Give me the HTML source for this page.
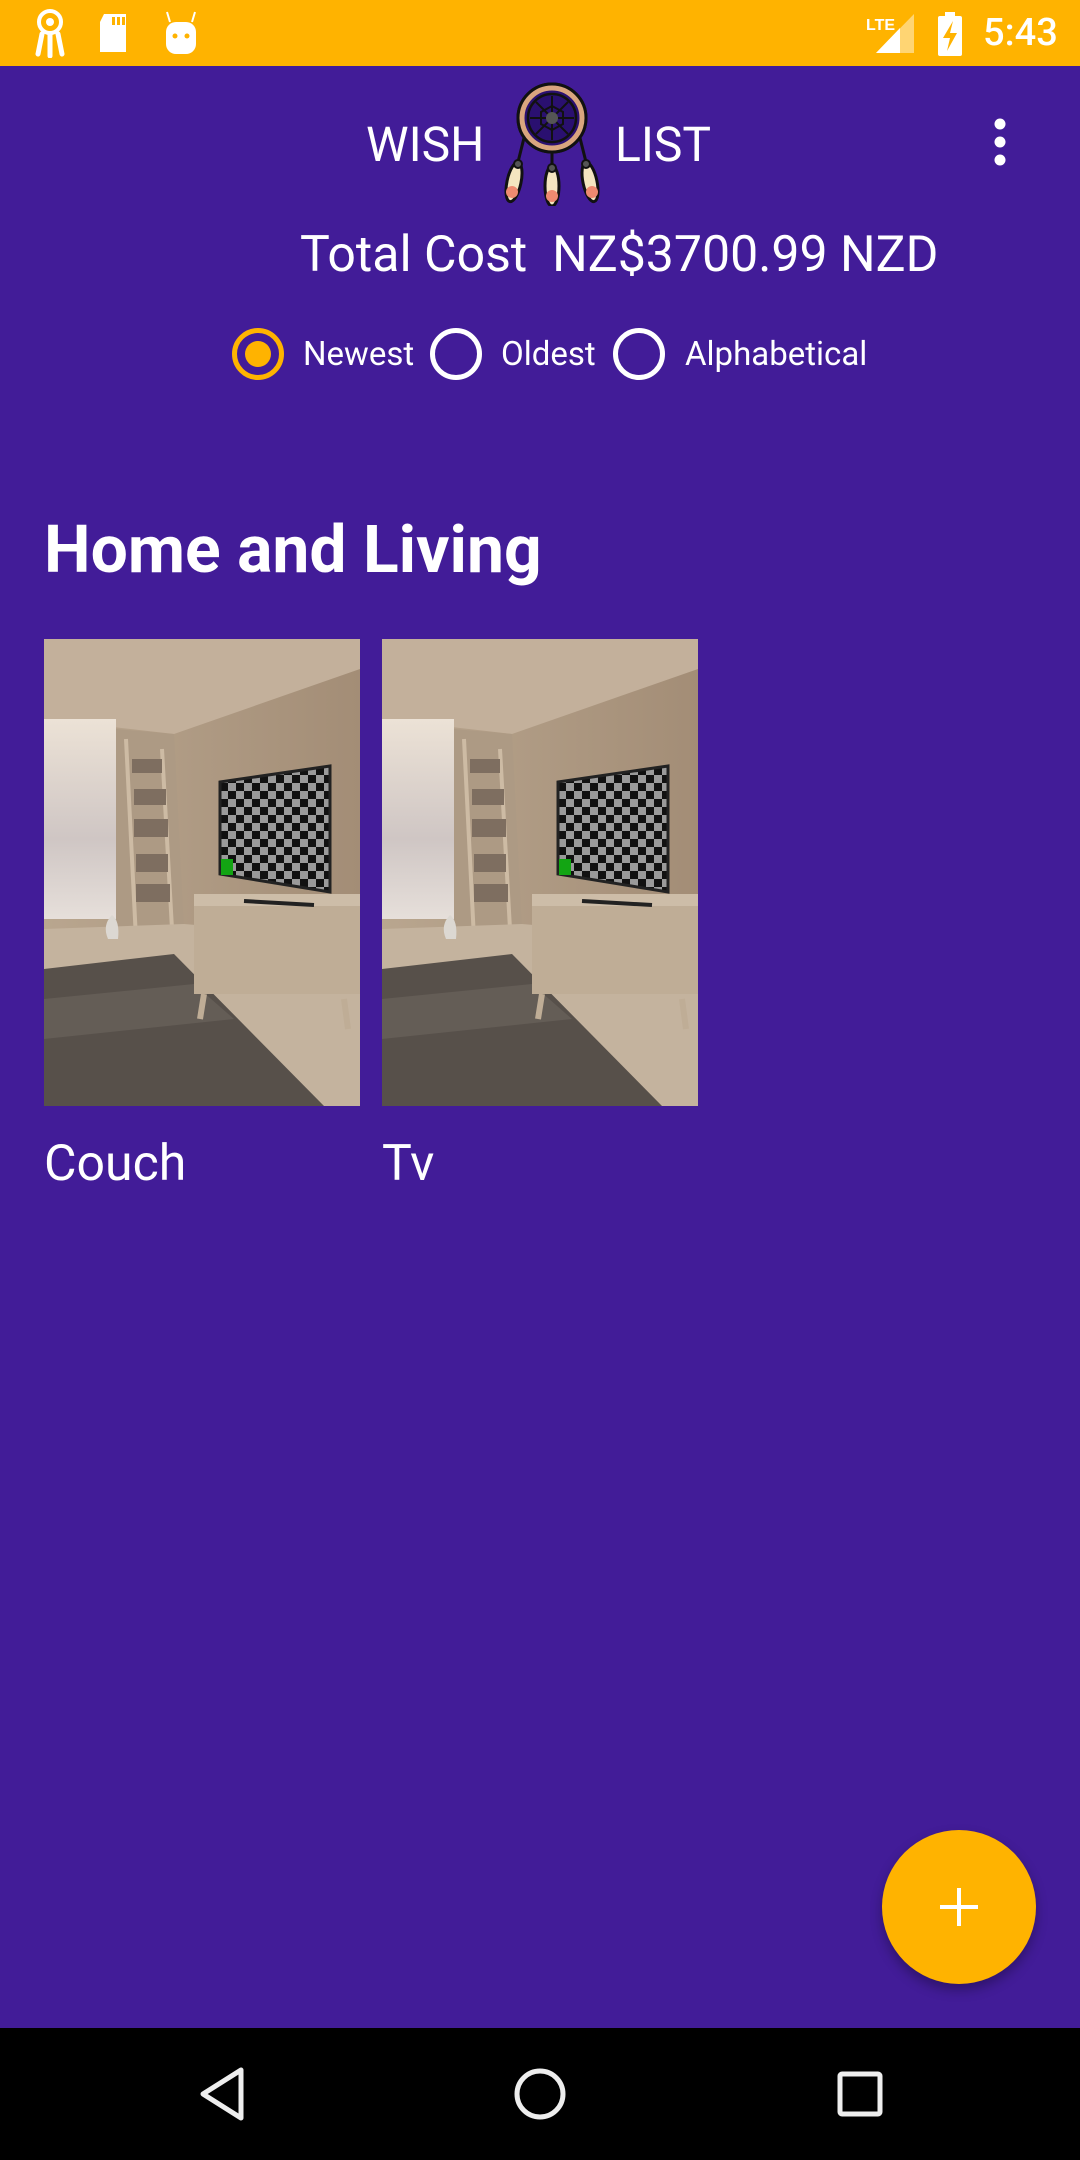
<!DOCTYPE html>
<html><head><meta charset="utf-8"><style>
*{margin:0;padding:0;box-sizing:border-box}
body{width:1080px;height:2160px;background:#421c98;font-family:"Roboto","Liberation Sans",sans-serif;color:#fff;position:relative;overflow:hidden}
.abs{position:absolute}
.sb{left:0;top:0;width:1080px;height:66px;background:#ffb300}
.nav{left:0;top:2028px;width:1080px;height:132px;background:#000}
.t{white-space:nowrap;line-height:1}
.radio{border-radius:50%;border:5px solid #fff;width:52px;height:52px}
</style></head><body>
<div class="abs sb"></div>
<svg class="abs" style="left:28px;top:8px" width="180" height="50" viewBox="0 0 180 50">
 <circle cx="22" cy="14" r="11" fill="none" stroke="#fff" stroke-width="4"/>
 <circle cx="22" cy="14" r="4" fill="#fff"/>
 <path d="M14 26 L10 46 M22 27 L22 48 M30 26 L34 46" stroke="#fff" stroke-width="5" stroke-linecap="round"/>
 <path d="M76 6 H98 V44 H72 V14 Z" fill="#fff"/>
 <rect x="84" y="9" width="3" height="8" fill="#ffb300"/><rect x="89" y="9" width="3" height="8" fill="#ffb300"/><rect x="94" y="9" width="3" height="8" fill="#ffb300"/>
 <rect x="138" y="14" width="30" height="32" rx="10" fill="#fff"/>
 <path d="M142 14 L139 4 M164 14 L167 4" stroke="#fff" stroke-width="2"/>
 <circle cx="147" cy="28" r="2.5" fill="#ffb300"/><circle cx="159" cy="28" r="2.5" fill="#ffb300"/>
</svg>
<svg class="abs" style="left:860px;top:8px" width="110" height="50" viewBox="0 0 110 50">
 <text x="6" y="22" font-size="16" font-weight="bold" fill="#fff" font-family="Liberation Sans">LTE</text>
 <path d="M16 45 L54 6 L54 45 Z" fill="#fff" opacity="0.45"/>
 <path d="M16 45 L40 20 L40 45 Z" fill="#fff"/>
 <rect x="78" y="8" width="24" height="40" rx="2" fill="#fff"/>
 <rect x="85" y="4" width="10" height="5" fill="#fff"/>
 <path d="M93 13 L83 30 L90 30 L87 43 L97 25 L90 25 Z" fill="#ffb300"/>
</svg>
<div class="abs t" style="left:983px;top:14px;font-size:38px;font-weight:500">5:43</div>

<div class="abs t" style="left:366px;top:121px;font-size:48px">WISH</div>
<div class="abs t" style="left:615px;top:121px;font-size:48px">LIST</div>
<svg class="abs" style="left:500px;top:78px" width="104" height="128" viewBox="0 0 104 128">
 <circle cx="52" cy="40" r="34" fill="#2a1070" stroke="#111" stroke-width="3"/>
 <circle cx="52" cy="40" r="31" fill="none" stroke="#d9a57f" stroke-width="7"/>
 <circle cx="52" cy="40" r="34" fill="none" stroke="#111" stroke-width="3"/>
 <circle cx="52" cy="40" r="24" fill="none" stroke="#111" stroke-width="2.5"/>
 <path d="M52 18 L52 62 M30 40 L74 40 M36 24 L68 56 M68 24 L36 56" stroke="#111" stroke-width="2"/>
 <polygon points="52,28 63,34 63,46 52,52 41,46 41,34" fill="none" stroke="#111" stroke-width="2"/>
 <circle cx="52" cy="40" r="6" fill="#555"/>
 <path d="M24 60 L18 84 M52 74 L52 90 M80 60 L86 84" stroke="#111" stroke-width="3"/>
 <g stroke="#111" stroke-width="3">
  <ellipse cx="14" cy="104" rx="7" ry="20" fill="#f4e5c0" transform="rotate(12 14 104)"/>
  <ellipse cx="52" cy="108" rx="7" ry="20" fill="#f4e5c0"/>
  <ellipse cx="90" cy="104" rx="7" ry="20" fill="#f4e5c0" transform="rotate(-12 90 104)"/>
 </g>
 <circle cx="12" cy="114" r="6" fill="#ee8a70"/><circle cx="52" cy="118" r="6" fill="#ee8a70"/><circle cx="92" cy="114" r="6" fill="#ee8a70"/>
 <circle cx="18" cy="86" r="4" fill="#555" stroke="#111" stroke-width="2"/><circle cx="52" cy="90" r="4" fill="#555" stroke="#111" stroke-width="2"/><circle cx="86" cy="86" r="4" fill="#555" stroke="#111" stroke-width="2"/>
</svg>
<svg class="abs" style="left:990px;top:118px" width="20" height="48"><circle cx="10" cy="6" r="5.5" fill="#fff"/><circle cx="10" cy="24" r="5.5" fill="#fff"/><circle cx="10" cy="42" r="5.5" fill="#fff"/></svg>

<div class="abs t" style="left:300px;top:230px;font-size:50px">Total Cost&nbsp; NZ$3700.99 NZD</div>

<div class="abs radio" style="left:232px;top:328px;border-color:#ffb300"><div style="position:absolute;left:8px;top:8px;width:26px;height:26px;border-radius:50%;background:#ffb300"></div></div>
<div class="abs t" style="left:303px;top:338px;font-size:33px">Newest</div>
<div class="abs radio" style="left:430px;top:328px"></div>
<div class="abs t" style="left:501px;top:338px;font-size:33px">Oldest</div>
<div class="abs radio" style="left:613px;top:328px"></div>
<div class="abs t" style="left:685px;top:338px;font-size:33px">Alphabetical</div>

<div class="abs t" style="left:44px;top:518px;font-size:66px;font-weight:bold">Home and Living</div>

<svg width="0" height="0" style="position:absolute"><defs>
<linearGradient id="wall" x1="0" y1="0" x2="1" y2="0"><stop offset="0" stop-color="#b9a68f"/><stop offset="1" stop-color="#a38d76"/></linearGradient>
<linearGradient id="win" x1="0" y1="0" x2="0" y2="1"><stop offset="0" stop-color="#ece2d6"/><stop offset="0.6" stop-color="#cfc6c4"/><stop offset="1" stop-color="#e6dfda"/></linearGradient>
<pattern id="chk" width="16" height="16" patternUnits="userSpaceOnUse"><rect width="16" height="16" fill="#9a9a9a"/><rect width="8" height="8" fill="#111"/><rect x="8" y="8" width="8" height="8" fill="#111"/></pattern>
<g id="room">
 <rect width="316" height="467" fill="url(#wall)"/>
 <path d="M0 0 H316 V30 L130 95 L0 80 Z" fill="#c3b09b"/>
 <rect x="0" y="80" width="72" height="200" fill="url(#win)"/>
 <path d="M72 90 L130 95 L140 290 L72 300 Z" fill="#ad9a84"/>
 <path d="M82 100 L92 300 M118 110 L128 290" stroke="#cdbba4" stroke-width="4"/>
 <g fill="#7e6e60"><rect x="88" y="120" width="30" height="14"/><rect x="90" y="150" width="32" height="16"/><rect x="90" y="180" width="34" height="18"/><rect x="92" y="215" width="32" height="18"/><rect x="92" y="245" width="34" height="18"/></g>
 <path d="M0 290 L140 285 L316 300 V467 H0 Z" fill="#c4b39e"/>
 <path d="M0 330 L130 315 L280 467 H0 Z" fill="#57504a"/>
 <path d="M0 360 L150 345 L190 380 L0 400 Z" fill="#6a625b" opacity="0.7"/>
 <rect x="150" y="255" width="166" height="100" fill="#bfad96"/>
 <rect x="150" y="255" width="166" height="12" fill="#cdbda8"/>
 <path d="M160 355 L156 380 M300 360 L304 390" stroke="#bfad96" stroke-width="6"/>
 <path d="M176 143 L286 127 L286 253 L176 235 Z" fill="url(#chk)" stroke="#222" stroke-width="3"/>
 <rect x="177" y="220" width="12" height="16" fill="#13a513"/>
 <path d="M200 262 L270 266" stroke="#222" stroke-width="4"/>
 <path d="M64 300 q-6 -14 4 -24 q8 6 6 24 Z" fill="#dcd8d2"/>
</g></defs></svg>

<svg class="abs" style="left:44px;top:639px" width="316" height="467" viewBox="0 0 316 467"><use href="#room"/></svg>
<svg class="abs" style="left:382px;top:639px" width="316" height="467" viewBox="0 0 316 467"><use href="#room"/></svg>

<div class="abs t" style="left:44px;top:1139px;font-size:50px">Couch</div>
<div class="abs t" style="left:382px;top:1139px;font-size:50px">Tv</div>

<div class="abs" style="left:882px;top:1830px;width:154px;height:154px;border-radius:50%;background:#ffb300;box-shadow:0 6px 12px rgba(0,0,0,0.3)"></div>
<svg class="abs" style="left:939px;top:1887px" width="40" height="40"><path d="M20 1 V39 M1 20 H39" stroke="#fff" stroke-width="4"/></svg>

<div class="abs nav"></div>
<svg class="abs" style="left:0;top:2028px" width="1080" height="132">
 <path d="M241 42 L241 90 L203 66 Z" fill="none" stroke="#eee" stroke-width="5" stroke-linejoin="round"/>
 <circle cx="540" cy="66" r="23" fill="none" stroke="#eee" stroke-width="5"/>
 <rect x="840" y="46" width="40" height="40" rx="2" fill="none" stroke="#eee" stroke-width="5"/>
</svg>
</body></html>
